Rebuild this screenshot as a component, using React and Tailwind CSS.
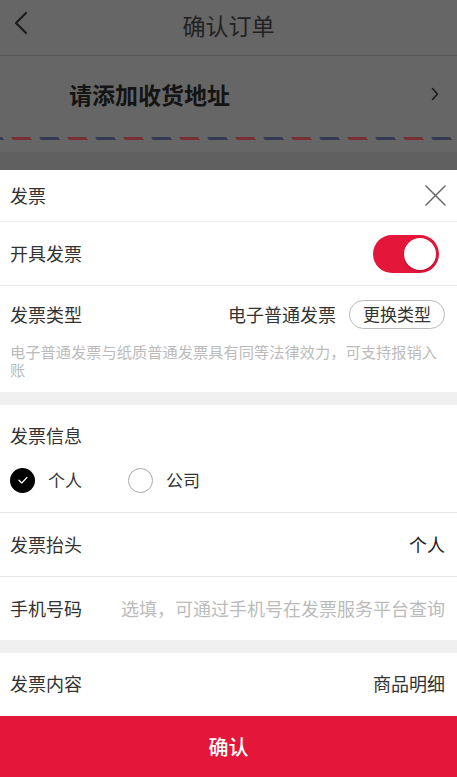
import React, { useState } from 'react';

function Stripes() {
  const segs = [];
  for (let i = 0; i < 19; i++) {
    const x = -17 + i * 28;
    segs.push(
      <polygon
        key={i}
        points={`${x},0 ${x + 19},0 ${x + 21},3 ${x + 2},3`}
        fill={i % 2 === 0 ? '#353a52' : '#7a2f37'}
      />
    );
  }
  return (
    <svg width="457" height="3" viewBox="0 0 457 3" className="block w-full h-[3px]">
      {segs}
    </svg>
  );
}

function Radio({ checked, label, onClick }) {
  return (
    <button type="button" onClick={onClick} className="flex items-center gap-[13px]">
      {checked ? (
        <span className="w-[25px] h-[25px] rounded-full bg-black flex items-center justify-center">
          <svg width="12" height="12" viewBox="0 0 12 12" fill="none">
            <path d="M2 6.2 L4.8 9 L10 3.4" stroke="#fff" strokeWidth="1.3" strokeLinecap="round" strokeLinejoin="round" />
          </svg>
        </span>
      ) : (
        <span className="w-[25px] h-[25px] rounded-full border-[1.5px] border-[#a8a8a8] bg-white" />
      )}
      <span className="text-[17px] text-[#333]">{label}</span>
    </button>
  );
}

export default function App() {
  const [invoiceOn, setInvoiceOn] = useState(true);
  const [type, setType] = useState('personal');

  return (
    <div className="w-full h-[777px] flex flex-col overflow-hidden font-['Noto_Sans_CJK_SC',sans-serif] bg-[#666666]">
      {/* dimmed page behind the sheet */}
      <div className="h-[56px] border-b border-[#555] flex items-center justify-center relative pb-[4px]">
        <svg width="16" height="24" viewBox="0 0 16 24" fill="none" className="absolute left-[12px] top-[11px]">
          <path d="M14 2 L4 12 L14 22" stroke="#1c1c1c" strokeWidth="2.2" strokeLinecap="round" strokeLinejoin="round" />
        </svg>
        <span className="text-[23px] text-[#222]">确认订单</span>
      </div>
      <div className="h-[76px] flex items-center justify-between pl-[69px] pr-[18px]">
        <span className="text-[23px] font-bold text-[#141414]">请添加收货地址</span>
        <svg width="8" height="14" viewBox="0 0 8 14" fill="none">
          <path d="M1.5 1.5 L6.5 7 L1.5 12.5" stroke="#1c1c1c" strokeWidth="1.6" strokeLinecap="round" strokeLinejoin="round" />
        </svg>
      </div>
      <div className="h-[5px]" />
      <Stripes />
      <div className="h-[12px]" />
      <div className="h-[18px] bg-[#606060]" />

      {/* invoice sheet */}
      <div className="flex-1 bg-white flex flex-col">
        <div className="h-[52px] border-b border-[#eee] flex items-center justify-between pl-[10px] pr-[11px]">
          <span className="text-[18px] text-[#333]">发票</span>
          <svg width="21" height="21" viewBox="0 0 21 21" fill="none">
            <path d="M1 1 L20 20 M20 1 L1 20" stroke="#666" strokeWidth="1.5" strokeLinecap="round" />
          </svg>
        </div>

        <div className="h-[64px] border-b border-[#e8e8e8] flex items-center justify-between pl-[10px] pr-[18px]">
          <span className="text-[18px] text-[#333]">开具发票</span>
          <button
            type="button"
            onClick={() => setInvoiceOn(!invoiceOn)}
            className={`w-[66px] h-[38px] rounded-full p-[3px] flex ${invoiceOn ? 'bg-[#e4163a] justify-end' : 'bg-[#ddd] justify-start'}`}
          >
            <span className="w-[32px] h-[32px] rounded-full bg-white shadow-[0_1px_2px_rgba(0,0,0,0.25)]" />
          </button>
        </div>

        <div className="flex flex-col pb-[14px]">
          <div className="h-[56px] flex items-center justify-between pl-[10px] pr-[12px]">
            <span className="text-[18px] text-[#333]">发票类型</span>
            <div className="flex items-center gap-[13px]">
              <span className="text-[18px] text-[#333]">电子普通发票</span>
              <button type="button" className="w-[96px] h-[29px] rounded-full border border-[#bbb] text-[17px] text-[#333] flex items-center justify-center">
                更换类型
              </button>
            </div>
          </div>
          <p className="px-[10px] text-[15.25px] leading-[18px] text-[#bbb]">
            电子普通发票与纸质普通发票具有同等法律效力，可支持报销入账
          </p>
        </div>

        <div className="h-[13px] bg-[#f0f0f0]" />

        <div className="flex flex-col border-b border-[#e8e8e8] pb-[17px]">
          <div className="h-[60px] flex items-center pl-[10px]">
            <span className="text-[18px] text-[#333]">发票信息</span>
          </div>
          <div className="h-[30px] flex items-center pl-[10px] gap-[46px]">
            <Radio checked={type === 'personal'} label="个人" onClick={() => setType('personal')} />
            <Radio checked={type === 'company'} label="公司" onClick={() => setType('company')} />
          </div>
        </div>

        <div className="h-[64px] border-b border-[#e8e8e8] flex items-center justify-between pl-[10px] pr-[12px]">
          <span className="text-[18px] text-[#333]">发票抬头</span>
          <span className="text-[18px] text-[#222]">{type === 'personal' ? '个人' : '公司'}</span>
        </div>

        <div className="h-[63px] flex items-center justify-between pl-[10px] pr-[12px]">
          <span className="text-[18px] text-[#333] shrink-0">手机号码</span>
          <input
            type="tel"
            placeholder="选填，可通过手机号在发票服务平台查询"
            className="flex-1 min-w-0 text-right text-[18px] text-[#333] placeholder-[#bbb] outline-none bg-transparent ml-[20px]"
          />
        </div>

        <div className="h-[13px] bg-[#f0f0f0]" />

        <div className="h-[60px] flex items-center justify-between pl-[10px] pr-[12px]">
          <span className="text-[18px] text-[#333]">发票内容</span>
          <span className="text-[18px] text-[#333]">商品明细</span>
        </div>

        <button type="button" className="mt-auto h-[61px] bg-[#e4163a] text-white text-[20px] font-medium flex items-center justify-center">
          确认
        </button>
      </div>
    </div>
  );
}
